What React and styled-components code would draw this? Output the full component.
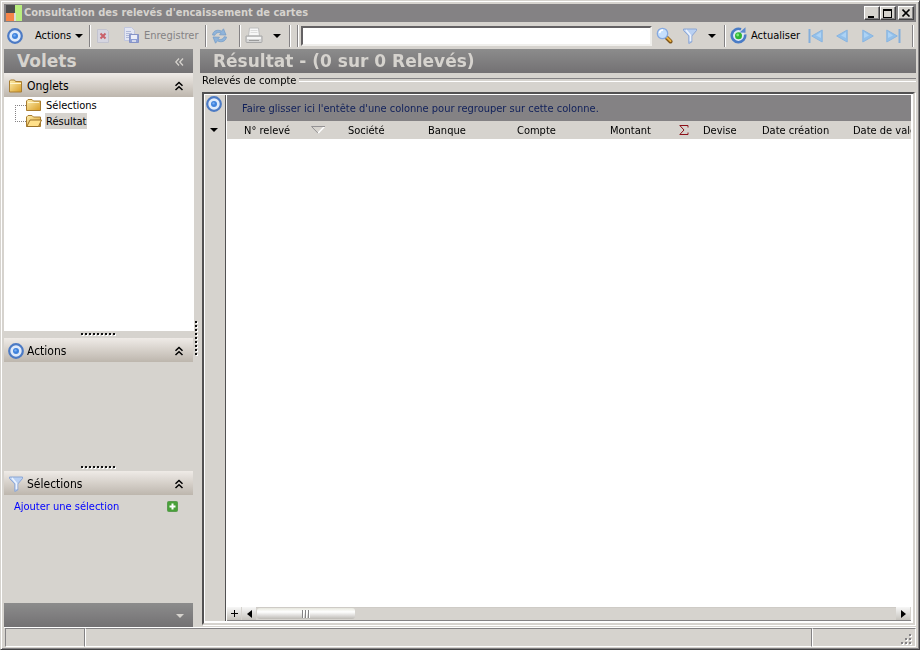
import React from "react";
import styled, { createGlobalStyle, css } from "styled-components";

const face = "#d6d3ce";
const shade = "#848284";

const GlobalStyle = createGlobalStyle`
  * { box-sizing: border-box; }
  body { margin: 0; background: ${face}; }
  body, button, input, table {
    font-family: "DejaVu Sans Condensed", "Noto Sans", sans-serif;
    font-size: 11px;
    color: #000;
  }
  button { border: 0; padding: 0; margin: 0; background: none; }
  svg { display: block; flex: none; }
`;

const Window = styled.div`
  display: flex;
  flex-direction: column;
  height: 100vh;
  padding: 2px 1px 1px 2px;
  background: ${face};
  border: 1px solid;
  border-color: #d6d3ce #424142 #424142 #d6d3ce;
  box-shadow: inset 1px 1px #fff, inset -1px -1px ${shade};
`;

const TitleBar = styled.header`
  display: flex;
  align-items: center;
  flex: none;
  height: 18px;
  margin: 1px 2px 0 1px;
  padding: 0 2px 0 2px;
  background: ${shade};
`;

const WindowTitle = styled.h1`
  flex: 1;
  margin: 0 0 0 2px;
  font-size: 11px;
  line-height: 18px;
  font-weight: bold;
  color: ${face};
  white-space: nowrap;
`;

const CaptionButton = styled.button`
  display: grid;
  place-items: center;
  width: 16px;
  height: 14px;
  margin-left: ${(p) => (p.$apart ? "2px" : "0")};
  background: ${face};
  border: 1px solid;
  border-color: #fff #424142 #424142 #fff;
  box-shadow: inset -1px -1px ${shade};
`;

const Toolbar = styled.nav`
  display: flex;
  align-items: center;
  flex: none;
  height: 27px;
  padding: 0 4px 0 0;
`;

const ToolButton = styled.button`
  display: flex;
  align-items: center;
  flex: none;
  gap: 4px;
  width: ${(p) => p.$w}px;
  height: 24px;
  padding: 0 4px;
  white-space: nowrap;
  color: ${(p) => (p.disabled ? shade : "#000")};
`;

const Separator = styled.span`
  flex: none;
  width: 2px;
  height: 22px;
  margin-left: ${(p) => (p.$apart ? "6px" : "0")};
  border-left: 1px solid ${shade};
  border-right: 1px solid #fff;
`;

const SearchInput = styled.input`
  flex: 1;
  min-width: 0;
  height: 20px;
  margin-left: 2px;
  padding: 0 1px;
  background: #fff;
  border: 2px solid;
  border-color: #636163 #f0efec #f0efec #636163;
  border-radius: 0;
  outline: 0;
`;

const Body = styled.div`
  display: flex;
  flex: 1;
  min-height: 0;
  padding: 0 2px 0 1px;
`;

const Sidebar = styled.aside`
  display: flex;
  flex-direction: column;
  flex: none;
  width: 189px;
`;

const darkBand = css`
  background: linear-gradient(#8c8c8c, #737173);
  color: ${face};
`;

const Banner = styled.div`
  display: flex;
  align-items: center;
  justify-content: space-between;
  flex: none;
  height: 24px;
  padding: 1px 9px 0 13px;
  ${darkBand}
`;

const BannerTitle = styled.h2`
  margin: 0;
  font-family: "DejaVu Sans", sans-serif;
  font-size: 17px;
  line-height: 23px;
  font-weight: bold;
  white-space: nowrap;
`;

const PanelHeader = styled.button`
  display: flex;
  align-items: center;
  flex: none;
  gap: 3px;
  width: 100%;
  height: 24px;
  padding: 1px 8px 0 4px;
  font-size: 12px;
  text-align: left;
  background: linear-gradient(#efebe7, #bdb6ad);
`;

const PanelName = styled.span`
  flex: 1;
`;

const TreePanel = styled.ul`
  flex: 234 1 0;
  min-height: 0;
  margin: 0 -1px 0 0;
  padding: 0 0 0 11px;
  list-style: none;
  background: #fff;
`;

const TreeItem = styled.li`
  display: flex;
  align-items: center;
  height: 16px;
`;

const TreeLabel = styled.button`
  height: 16px;
  margin-left: 3px;
  padding: 0 1px;
  background: ${(p) => (p.$selected ? face : "transparent")};
`;

const Grip = styled.div`
  display: grid;
  place-items: center;
  flex: none;
  width: ${(p) => (p.$vertical ? "7px" : "auto")};
  height: ${(p) => (p.$vertical ? "auto" : "7px")};
`;

const Panel = styled.section`
  flex: ${(p) => p.$grow} 1 0;
  min-height: 0;
`;

const AddRow = styled.div`
  display: flex;
  align-items: center;
  justify-content: space-between;
  height: 22px;
  padding: 0 15px 0 10px;
`;

const AddLink = styled.a`
  color: #0000ff;
  text-decoration: none;
`;

const SidebarFooter = styled.button`
  display: flex;
  align-items: center;
  justify-content: flex-end;
  flex: none;
  height: 24px;
  padding: 2px 9px 0 0;
  ${darkBand}
`;

const Main = styled.main`
  display: flex;
  flex-direction: column;
  flex: 1;
  min-width: 0;
`;

const Legend = styled.div`
  display: flex;
  align-items: center;
  flex: none;
  gap: 3px;
  height: 14px;
  padding-left: 2px;
  margin-bottom: 5px;
  white-space: nowrap;

  &::after {
    content: "";
    flex: 1;
    height: 2px;
    border-top: 1px solid ${shade};
    border-bottom: 1px solid #fff;
  }
`;

const GridFrame = styled.div`
  display: flex;
  flex: 1;
  min-height: 0;
  margin: 0 1px 2px 2px;
  padding: 1px 2px 2px 1px;
  background: #fff;
  border: 2px solid;
  border-color: #525152 ${face} ${face} #525152;
  box-shadow: 1px 1px #fff;
`;

const Gutter = styled.div`
  display: flex;
  flex-direction: column;
  align-items: center;
  flex: none;
  width: 21px;
  padding: 1px 3px 0 0;
  background: ${face};
  border-right: 1px solid #525152;
`;

const GutterButton = styled.button`
  display: grid;
  place-items: center;
  width: 16px;
  height: ${(p) => p.$h}px;
`;

const Grid = styled.div`
  display: flex;
  flex-direction: column;
  flex: 1;
  min-width: 0;
  margin-left: 1px;
`;

const GroupBand = styled.div`
  flex: none;
  height: 26px;
  padding: 2px 0 0 15px;
  line-height: 24px;
  color: #10205a;
  background: ${shade};
  white-space: nowrap;
  overflow: hidden;
`;

const TableArea = styled.div`
  flex: 1;
  min-height: 0;
  overflow: hidden;
`;

const Table = styled.table`
  width: 100%;
  min-width: 682px;
  table-layout: fixed;
  border-collapse: collapse;
`;

const HeadCell = styled.th`
  width: ${(p) => (p.$w ? `${p.$w}px` : "auto")};
  height: 18px;
  padding: 0 0 0 ${(p) => (p.$first ? 17 : 8)}px;
  font-weight: normal;
  text-align: left;
  white-space: nowrap;
  overflow: hidden;
  background: ${face};
`;

const HeadContent = styled.span`
  display: flex;
  align-items: center;
  justify-content: space-between;
  padding-right: ${(p) => p.$end || 0}px;
`;

const ScrollRow = styled.div`
  display: flex;
  flex: none;
  height: 14px;
  background: ${face};
  border-bottom: 1px solid ${shade};
`;

const ScrollButton = styled.button`
  display: grid;
  place-items: center;
  flex: none;
  width: 14px;
  margin-right: ${(p) => (p.$apart ? "1px" : "0")};
  background: linear-gradient(#f7f7f7, #c6c3bd);
`;

const ScrollTrack = styled.div`
  flex: 1;
  background: ${face};
  border-top: 1px solid #cecbc6;
`;

const ScrollThumb = styled.div`
  display: grid;
  place-items: center;
  width: 98px;
  height: 11px;
  margin-left: 1px;
  border-radius: 3px;
  background: linear-gradient(#e7e7de, #fff 35%, #bdbab5);
`;

const StatusBar = styled.footer`
  display: flex;
  flex: none;
  height: 20px;
  margin: 0 2px 1px 1px;
  border-top: 1px solid #fff;
`;

const StatusCell = styled.div`
  display: flex;
  align-items: flex-end;
  justify-content: flex-end;
  flex: ${(p) => (p.$w ? `none` : "1")};
  width: ${(p) => (p.$w ? `${p.$w}px` : "auto")};
  margin-left: ${(p) => (p.$first ? "1px" : "0")};
  padding: 0 3px 1px 0;
  border: 1px solid;
  border-color: ${shade} #fff #fff ${(p) => (p.$first ? shade : "#fff")};
  border-right-color: ${(p) => (p.$last ? "#fff" : shade)};
`;

const Target = () => (
  <svg width="16" height="16" viewBox="0 0 16 16">
    <circle cx="8" cy="8" r="6.800" fill="#dfeafa" stroke="#4c7ac4" strokeWidth="2.200" />
    <circle cx="8" cy="8" r="3" fill="#3f82dc" />
    <circle cx="7.500" cy="7.400" r="1.200" fill="#79aef4" />
  </svg>
);

const Caret = ({ color = "#000" }) => (
  <svg width="8" height="4" viewBox="0 0 8 4">
    <path d="M0 0h8L4 4z" fill={color} />
  </svg>
);

const Logo = () => (
  <svg width="16" height="16" viewBox="0 0 16 16">
    <path d="M0 0h9v8H0z" fill="#4d4d4d" />
    <path d="M0 8h8v8H0z" fill="#f58549" />
    <path d="M8 8h2v8H8z" fill="#dcdcd8" />
    <path d="M9 0h7v16h-6V8H9z" fill="#b9ee7e" />
  </svg>
);

const DeleteDoc = () => (
  <svg width="16" height="16" viewBox="0 0 16 16">
    <path d="M2.500 1.500h9l2 2v11h-11z" fill="#d5d5e0" stroke="#c2c3cf" />
    <path d="M5.500 5.500l5 5M10.500 5.500l-5 5" stroke="#c9606a" strokeWidth="2" />
  </svg>
);

const SaveDoc = () => (
  <svg width="17" height="17" viewBox="0 0 17 17">
    <path d="M1.500 .5h7l3 3v10h-10z" fill="#e3e6f3" stroke="#c0c6de" />
    <path d="M3 4.500h5M3 6.500h6M3 8.500h4M3 10.500h3" stroke="#b0b9d8" />
    <path d="M6.500 7.500h9v8h-9z" fill="#8f9fd4" stroke="#8693c6" />
    <path d="M8 8h6v4H8z" fill="#eceef8" />
    <path d="M9 13h4v2H9z" fill="#d3d8eb" />
  </svg>
);

const Sync = () => (
  <svg width="17" height="16" viewBox="0 0 17 16">
    <path d="M1.500 7C2 3.500 5 1.500 9 2.500l1.500.7L12.500.8 15 7l-6.500-.2 1.600-1.700C7.500 4 5 4.500 4 7.200z" fill="#8fb4da" stroke="#7199c6" strokeWidth=".7" />
    <path d="M15.500 9c-.5 3.500-3.500 5.500-7.500 4.500l-1.500-.7-2 2.400L2 9l6.500.2-1.600 1.700c2.600 1.100 5.100.6 6.100-2.100z" fill="#8fb4da" stroke="#7199c6" strokeWidth=".7" />
  </svg>
);

const Printer = () => (
  <svg width="18" height="17" viewBox="0 0 18 17">
    <path d="M4.500 1h9l1 8h-11z" fill="#f7f7f7" stroke="#bdbdbd" />
    <path d="M5.500 3.500h7M5.500 5.500h7" stroke="#dcdcdc" />
    <path d="M1 9h16v5.500q0 1-1 1H2q-1 0-1-1z" fill="#d5d5d5" stroke="#a8a8a8" />
    <path d="M2 10h14v2H2z" fill="#f7f7f7" />
    <path d="M4 13.500h10" stroke="#9b9b9b" />
  </svg>
);

const Magnifier = () => (
  <svg width="17" height="17" viewBox="0 0 17 17">
    <path d="M10.500 10.500l4 4" stroke="#7d5418" strokeWidth="4" strokeLinecap="round" />
    <path d="M11 10.500l3.500 3.500" stroke="#e9b040" strokeWidth="2" strokeLinecap="round" />
    <circle cx="6.500" cy="6.500" r="5.200" fill="#c6dffb" stroke="#86a9e0" strokeWidth="1.300" />
    <path d="M3.500 6q.5-3 3.500-3" fill="none" stroke="#fff" strokeWidth="1.700" />
  </svg>
);

const Funnel = () => (
  <svg width="16" height="16" viewBox="0 0 16 16">
    <path d="M1.500 1h13v1.500L9.800 8v6l-3 1.500V8L1.500 2.500z" fill="#b9d0f2" stroke="#8ca6d4" />
    <path d="M4 2l4.500 5.500v5.500" fill="none" stroke="#eef4fe" strokeWidth="1.600" />
  </svg>
);

const RefreshBall = () => (
  <svg width="17" height="17" viewBox="0 0 17 17">
    <circle cx="8.500" cy="8.500" r="6" fill="#dfe9f8" />
    <path d="M11 2.300A6.700 6.700 0 1 0 15.100 7.500" fill="none" stroke="#4a7cc6" strokeWidth="2.600" />
    <path d="M9.500 5.500L15.500 5.800V.3z" fill="#5b8ad0" />
    <circle cx="8.500" cy="8.800" r="3.500" fill="#2fb635" />
    <circle cx="7.700" cy="8" r="1.400" fill="#81e77d" />
  </svg>
);

const NavArrow = ({ back, edge }) => {
  const w = edge ? 15 : 12;
  return (
    <svg width={w} height="14" viewBox={`0 0 ${w} 14`}>
      <g transform={back ? `translate(${w} 0) scale(-1 1)` : undefined}>
        <path d="M.8 1L11.300 7 .8 13z" fill="#93c0ea" stroke="#8ab5e0" />
        <path d="M2 3v6l5-2.500z" fill="#add3f5" />
        {edge && <path d="M13.500 0v14" stroke="#84aedb" strokeWidth="2" />}
      </g>
    </svg>
  );
};

const ChevronsUp = () => (
  <svg width="12" height="10" viewBox="0 0 12 10" fill="none" stroke="#000" strokeWidth="1.500">
    <path d="M2.500 4.800L6 1.500l3.500 3.300M2.500 9L6 5.700 9.500 9" />
  </svg>
);

const ChevronsLeft = () => (
  <svg width="9" height="8" viewBox="0 0 9 8" fill="none" stroke={face} strokeWidth="1.300">
    <path d="M4 .5L.8 4 4 7.500M8 .5L4.800 4 8 7.500" />
  </svg>
);

const Folder = ({ open, tab }) => (
  <svg width="16" height="14" viewBox="0 0 16 14">
    <defs>
      <linearGradient id="folderFill" x1="0" y1="0" x2="1" y2="1">
        <stop offset="0" stopColor="#fff0b0" />
        <stop offset="1" stopColor="#d89c24" />
      </linearGradient>
    </defs>
    <path d={tab ? "M1.500 2L2.500 1h4l1 1.500h6V13h-12z" : "M.5 3L2 1.500h4L7.500 3h7v9.500H.5z"} fill="url(#folderFill)" stroke="#a87c30" />
    {open ? (
      <path d="M4 6h11.500l-3 6.500H.8z" fill="#ffe08a" stroke="#9c7228" />
    ) : (
      <path d="M2 4.500h11" stroke="#fff5cb" />
    )}
  </svg>
);

const TreeBranch = ({ last }) => (
  <svg width="11" height="16" viewBox="0 0 11 16" stroke="#848284" strokeDasharray="1 1" fill="none">
    <path d={last ? "M.5 0v8" : "M.5 8v8"} />
    <path d="M0 8.500h11" />
  </svg>
);

const Dots = ({ vertical }) => (
  <svg width={vertical ? 3 : 35} height={vertical ? 35 : 3}>
    {Array.from({ length: 9 }, (_, i) => (
      <g key={i} transform={vertical ? `translate(0 ${i * 4})` : `translate(${i * 4} 0)`}>
        <path d="M1 1h2v2H1z" fill="#fff" />
        <path d="M0 0h2v2H0z" fill="#111" />
      </g>
    ))}
  </svg>
);

const PlusBadge = () => (
  <svg width="11" height="11" viewBox="0 0 11 11">
    <rect x=".5" y=".5" width="10" height="10" rx="1" fill="#49a139" stroke="#5b9a50" />
    <path d="M5.500 2.500v6M2.500 5.500h6" stroke="#fff" strokeWidth="2" />
  </svg>
);

const SortMark = () => (
  <svg width="14" height="8" viewBox="0 0 14 8">
    <path d="M13.500 .5L7 7.200" stroke="#fff" strokeWidth="1.500" fill="none" />
    <path d="M14 .5H.5L7 7.200" stroke="#949294" fill="none" />
  </svg>
);

const Sigma = () => (
  <svg width="10" height="10" viewBox="0 0 10 10" fill="none" stroke="#8c1018">
    <path d="M9 2.500V.5H.8L5 5 .8 9.500H9v-2" />
  </svg>
);

const SideArrow = ({ right }) => (
  <svg width="5" height="8" viewBox="0 0 5 8">
    <path d={right ? "M0 0l5 4-5 4z" : "M5 0L0 4l5 4z"} />
  </svg>
);

const Plus = () => (
  <svg width="7" height="7" viewBox="0 0 7 7">
    <path d="M3.500 0v7M0 3.500h7" stroke="#000" />
  </svg>
);

const ThumbLines = () => (
  <svg width="8" height="8" viewBox="0 0 8 8">
    <path d="M.5 0v8M3.500 0v8M6.500 0v8" stroke="#848284" />
    <path d="M1.500 0v8M4.500 0v8M7.500 0v8" stroke="#fff" />
  </svg>
);

const SizeGrip = () => (
  <svg width="11" height="11" viewBox="0 0 11 11">
    {[[8, 0], [4, 4], [8, 4], [0, 8], [4, 8], [8, 8]].map(([x, y]) => (
      <g key={`${x}-${y}`}>
        <path d={`M${x + 1} ${y + 1}h2v2h-2z`} fill="#fff" />
        <path d={`M${x} ${y}h2v2h-2z`} fill="#848284" />
      </g>
    ))}
  </svg>
);

const columns = [
  { name: "N° relevé", w: 113, mark: <SortMark />, end: 15 },
  { name: "Société", w: 80 },
  { name: "Banque", w: 89 },
  { name: "Compte", w: 93 },
  { name: "Montant", w: 93, mark: <Sigma />, end: 6 },
  { name: "Devise", w: 59 },
  { name: "Date création", w: 91 },
  { name: "Date de valeur" },
];

export default function App() {
  return (
    <Window>
      <GlobalStyle />
      <TitleBar>
        <Logo />
        <WindowTitle>Consultation des relevés d'encaissement de cartes</WindowTitle>
        <CaptionButton aria-label="Réduire">
          <svg width="10" height="9"><path d="M1 7h6v2H1z" /></svg>
        </CaptionButton>
        <CaptionButton aria-label="Agrandir">
          <svg width="10" height="9"><path d="M0 0h9v9H0zM1 2v6h7V2z" fillRule="evenodd" /></svg>
        </CaptionButton>
        <CaptionButton aria-label="Fermer" $apart>
          <svg width="9" height="8"><path d="M.5.500l7 7M7.500.500l-7 7" stroke="#000" strokeWidth="1.600" /></svg>
        </CaptionButton>
      </TitleBar>

      <Toolbar aria-label="Outils">
        <ToolButton $w={28} aria-label="Cible"><Target /></ToolButton>
        <ToolButton $w={58}>Actions <Caret /></ToolButton>
        <Separator />
        <ToolButton $w={28} disabled aria-label="Supprimer"><DeleteDoc /></ToolButton>
        <ToolButton $w={86} disabled><SaveDoc />Enregistrer</ToolButton>
        <Separator />
        <ToolButton $w={32} aria-label="Synchroniser"><Sync /></ToolButton>
        <Separator />
        <ToolButton $w={28} aria-label="Imprimer"><Printer /></ToolButton>
        <ToolButton $w={20} aria-label="Options d'impression"><Caret /></ToolButton>
        <Separator />
        <Separator $apart />
        <SearchInput type="text" aria-label="Rechercher" autoFocus />
        <ToolButton $w={26} aria-label="Lancer la recherche"><Magnifier /></ToolButton>
        <ToolButton $w={26} aria-label="Filtrer"><Funnel /></ToolButton>
        <ToolButton $w={20} aria-label="Options de filtre"><Caret /></ToolButton>
        <Separator />
        <ToolButton $w={78}><RefreshBall />Actualiser</ToolButton>
        <ToolButton $w={28} aria-label="Premier"><NavArrow back edge /></ToolButton>
        <ToolButton $w={26} aria-label="Précédent"><NavArrow back /></ToolButton>
        <ToolButton $w={24} aria-label="Suivant"><NavArrow /></ToolButton>
        <ToolButton $w={30} aria-label="Dernier"><NavArrow edge /></ToolButton>
        <Separator />
      </Toolbar>

      <Body>
        <Sidebar>
          <Banner>
            <BannerTitle>Volets</BannerTitle>
            <button aria-label="Masquer les volets"><ChevronsLeft /></button>
          </Banner>
          <PanelHeader><Folder tab /><PanelName>Onglets</PanelName><ChevronsUp /></PanelHeader>
          <TreePanel>
            <TreeItem><TreeBranch /><Folder /><TreeLabel>Sélections</TreeLabel></TreeItem>
            <TreeItem><TreeBranch last /><Folder open /><TreeLabel $selected>Résultat</TreeLabel></TreeItem>
          </TreePanel>
          <Grip><Dots /></Grip>
          <PanelHeader><Target /><PanelName>Actions</PanelName><ChevronsUp /></PanelHeader>
          <Panel $grow={102} />
          <Grip><Dots /></Grip>
          <PanelHeader><Funnel /><PanelName>Sélections</PanelName><ChevronsUp /></PanelHeader>
          <Panel $grow={108}>
            <AddRow>
              <AddLink href="#ajouter">Ajouter une sélection</AddLink>
              <button aria-label="Ajouter"><PlusBadge /></button>
            </AddRow>
          </Panel>
          <SidebarFooter aria-label="Plus de volets"><Caret color={face} /></SidebarFooter>
        </Sidebar>

        <Grip $vertical><Dots vertical /></Grip>

        <Main>
          <Banner><BannerTitle>Résultat - (0 sur 0 Relevés)</BannerTitle></Banner>
          <Legend>Relevés de compte</Legend>
          <GridFrame>
            <Gutter>
              <GutterButton $h={16} aria-label="Cible"><Target /></GutterButton>
              <GutterButton $h={36} aria-label="Options de la grille"><Caret /></GutterButton>
            </Gutter>
            <Grid>
              <GroupBand>Faire glisser ici l'entête d'une colonne pour regrouper sur cette colonne.</GroupBand>
              <TableArea>
                <Table>
                  <thead>
                    <tr>
                      {columns.map((c, i) => (
                        <HeadCell key={c.name} scope="col" $w={c.w} $first={i === 0}>
                          <HeadContent $end={c.end}>{c.name}{c.mark}</HeadContent>
                        </HeadCell>
                      ))}
                    </tr>
                  </thead>
                  <tbody />
                </Table>
              </TableArea>
              <ScrollRow>
                <ScrollButton aria-label="Ajouter une ligne" $apart><Plus /></ScrollButton>
                <ScrollButton aria-label="Défiler à gauche"><SideArrow /></ScrollButton>
                <ScrollTrack><ScrollThumb><ThumbLines /></ScrollThumb></ScrollTrack>
                <ScrollButton aria-label="Défiler à droite" $apart><SideArrow right /></ScrollButton>
              </ScrollRow>
            </Grid>
          </GridFrame>
        </Main>
      </Body>

      <StatusBar>
        <StatusCell $w={80} $first />
        <StatusCell />
        <StatusCell $w={104} $last><SizeGrip /></StatusCell>
      </StatusBar>
    </Window>
  );
}
